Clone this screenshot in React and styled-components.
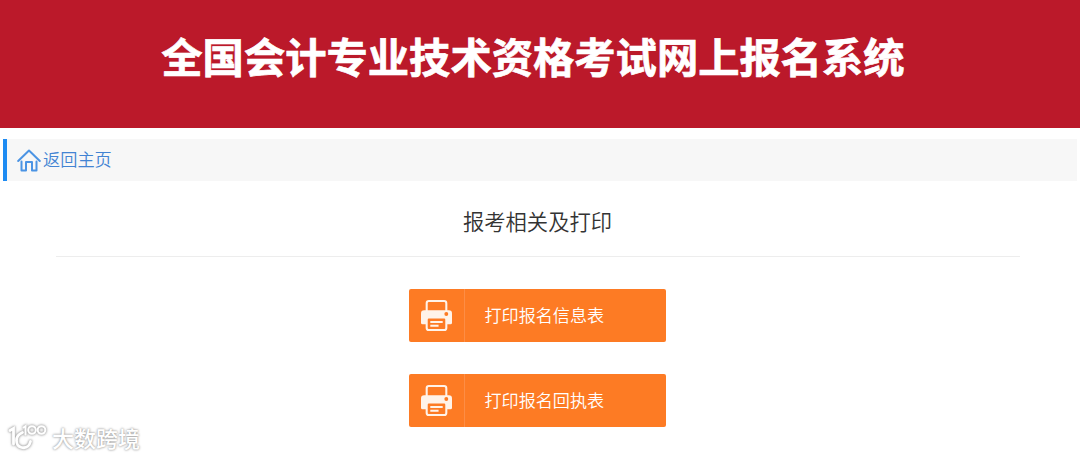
import styled, { createGlobalStyle } from 'styled-components';

const GlobalStyle = createGlobalStyle`
  * {
    box-sizing: border-box;
  }
  body {
    margin: 0;
    background: #fff;
    overflow: hidden;
    font-family: "Noto Sans CJK SC", sans-serif;
  }
`;

const Page = styled.div`
  position: relative;
  height: 457px;
  display: flex;
  flex-direction: column;
`;

const Header = styled.header`
  height: 128px;
  background: #bb192a;
  padding: 25px 14px 0 0;
  display: flex;
  justify-content: center;
`;

const Title = styled.h1`
  margin: 0;
  color: #fff;
  font-size: 41.3px;
  line-height: 60px;
  font-weight: 700;
  white-space: nowrap;
  -webkit-text-stroke: 0.7px #fff;
`;

const Breadcrumb = styled.nav`
  height: 42px;
  margin: 11px 3px 0;
  background: #f7f7f7;
  border-left: 4px solid #1e8bf2;
  display: flex;
  align-items: center;
  padding-left: 10px;
`;

const HomeLink = styled.a`
  display: flex;
  align-items: center;
  gap: 2px;
  color: #4384d3;
  font-size: 17.2px;
  line-height: 24px;
  font-weight: 350;
`;

const LinkText = styled.span`
  padding-bottom: 2px;
`;

const Content = styled.main`
  width: 964px;
  margin-left: 56px;
  display: flex;
  flex-direction: column;
  align-items: center;
`;

const SectionTitle = styled.h2`
  width: 100%;
  height: 76px;
  margin: 0 0 32px;
  padding: 24px 1px 0 0;
  border-bottom: 1px solid #ededed;
  color: #333;
  font-size: 21.3px;
  line-height: 32px;
  font-weight: 350;
  text-align: center;
`;

const ButtonList = styled.div`
  display: flex;
  flex-direction: column;
  gap: 32px;
  margin-right: 2px;
`;

const PrintButton = styled.button`
  width: 257px;
  height: 53px;
  padding: 0;
  border: 0;
  border-radius: 2px;
  background: #fd7b24;
  color: #fff;
  display: flex;
  align-items: center;
  font-family: inherit;
  font-size: 17.1px;
  font-weight: 350;
`;

const IconCell = styled.span`
  width: 56px;
  height: 53px;
  padding-left: 1px;
  border-right: 1px solid #fd8d45;
  display: flex;
  align-items: center;
  justify-content: center;
`;

const ButtonText = styled.span`
  padding: 0 0 2px 20px;
  line-height: 24px;
`;

const Watermark = styled.div`
  position: absolute;
  left: 8px;
  bottom: 5px;
  display: flex;
  align-items: center;
  gap: 5px;
  color: #fff;
  font-size: 22px;
  line-height: 30px;
  font-weight: 500;
  text-shadow: 0 0 2px #999, 0 0 3px #bbb;

  svg {
    filter: drop-shadow(0 0 1px #aaa) drop-shadow(0 0 1px #bbb);
  }
`;

const HomeIcon = () => (
  <svg width="24" height="23" viewBox="0 0 24 23" fill="none" stroke="#4b94e4" strokeWidth="2" strokeLinejoin="round" strokeLinecap="round">
    <path d="M1.200 12 12 1.500 22.800 12M4.500 12.500v9h4.500V13h6v8.500h4.500v-9" />
  </svg>
);

const PrinterIcon = () => (
  <svg width="31" height="31" viewBox="0 0 30 30" fill="none">
    <path d="M5.500 11V3.200q0-2.200 2.200-2.200h14.600q2.200 0 2.200 2.200V11" stroke="#fff3e9" strokeWidth="2" />
    <path d="M3 10h24q3 0 3 3v9q0 1.500-1.500 1.500h-27Q0 23.500 0 22v-9q0-3 3-3z" fill="#fff3e9" />
    <rect x="5.500" y="17" width="19" height="12" rx="2" fill="#fd7b24" stroke="#fff3e9" strokeWidth="2" />
    <path d="M9 21.300h12M9 25h8" stroke="#fff3e9" strokeWidth="1.900" />
    <circle cx="24.500" cy="13.500" r="1.900" fill="#fd7b24" />
  </svg>
);

const WatermarkLogo = () => (
  <svg width="39" height="27" viewBox="0 0 39 27" fill="none" stroke="#fff" strokeWidth="2.800" strokeLinecap="round">
    <path d="M2 6.500 5.500 4.500V20" />
    <path d="M14.500 8.500Q8.500 11 8.500 16.500t5 7q7 1.500 9-6" />
    <path d="M15.500 3.500 17.500 2.200v8.300" strokeWidth="2" />
    <circle cx="24" cy="6" r="3.800" strokeWidth="2" />
    <circle cx="33.500" cy="6" r="3.800" strokeWidth="2" />
  </svg>
);

const buttons = ['打印报名信息表', '打印报名回执表'];

const App = () => {
  return (
    <>
      <GlobalStyle />
      <Page>
        <Header>
          <Title>全国会计专业技术资格考试网上报名系统</Title>
        </Header>
        <Breadcrumb>
          <HomeLink>
            <HomeIcon />
            <LinkText>返回主页</LinkText>
          </HomeLink>
        </Breadcrumb>
        <Content>
          <SectionTitle>报考相关及打印</SectionTitle>
          <ButtonList>
            {buttons.map((label) => (
              <PrintButton key={label} type="button">
                <IconCell>
                  <PrinterIcon />
                </IconCell>
                <ButtonText>{label}</ButtonText>
              </PrintButton>
            ))}
          </ButtonList>
        </Content>
        <Watermark>
          <WatermarkLogo />
          <span>大数跨境</span>
        </Watermark>
      </Page>
    </>
  );
};

export default App;
